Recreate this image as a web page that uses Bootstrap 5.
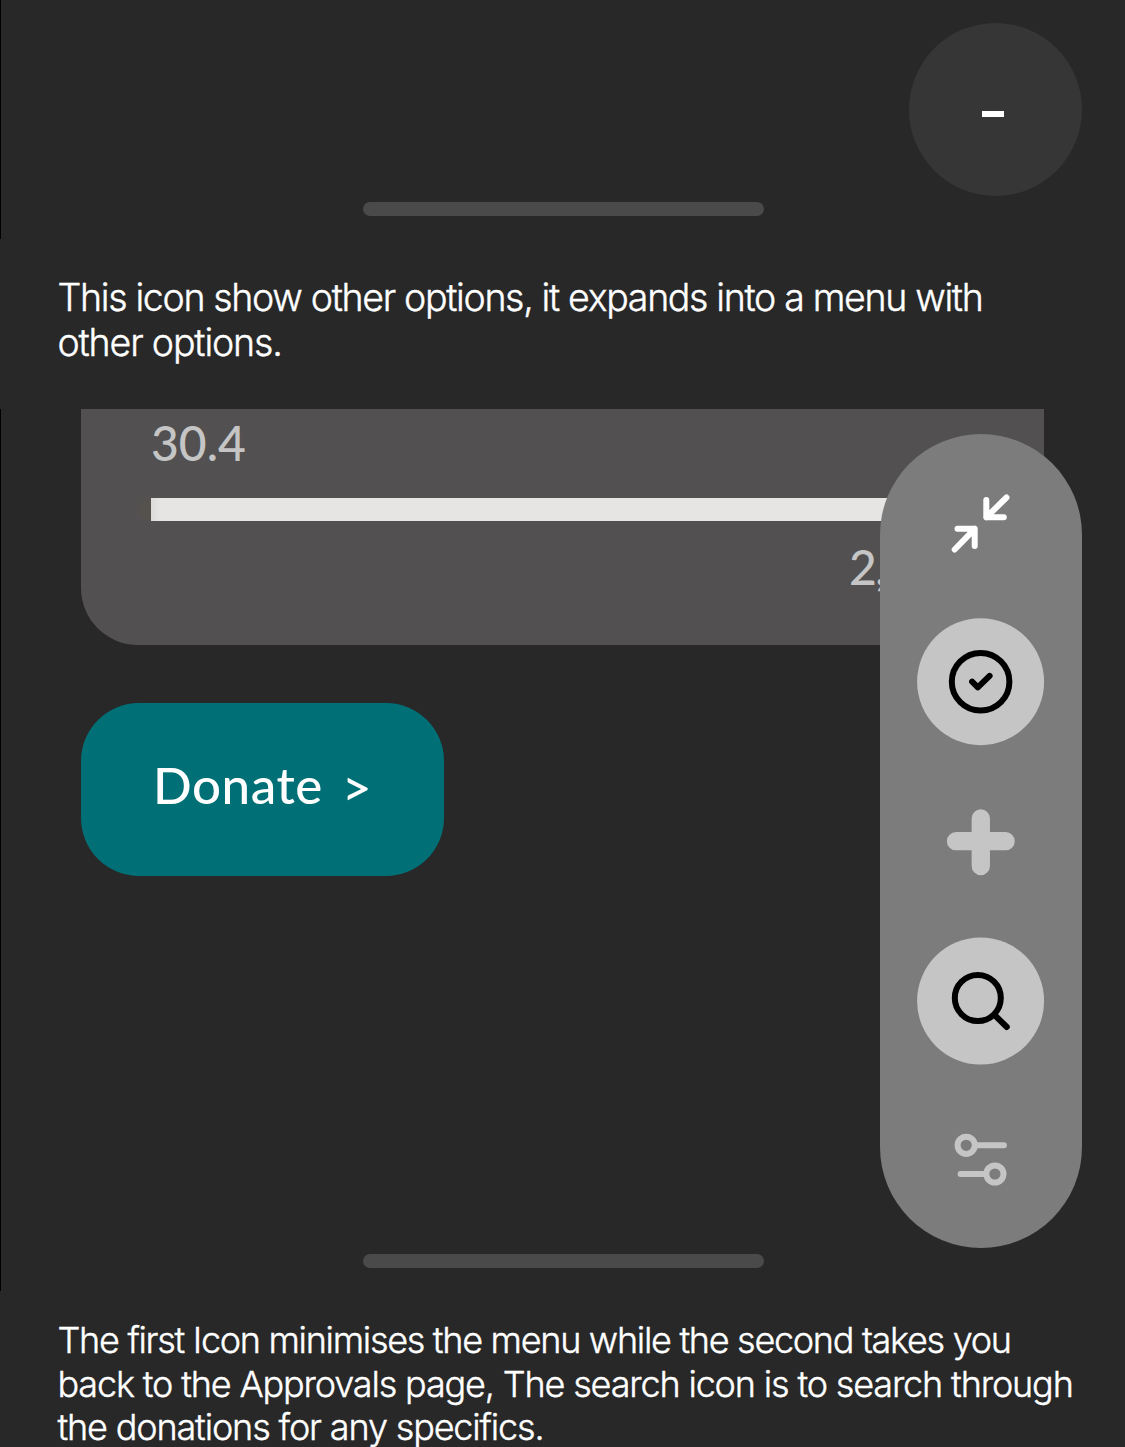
<!DOCTYPE html>
<html lang="en">
<head>
<meta charset="utf-8">
<meta name="viewport" content="width=device-width, initial-scale=1">
<title>Donation menu guide</title>
<link href="https://cdn.jsdelivr.net/npm/bootstrap@5.3.0/dist/css/bootstrap.min.css" rel="stylesheet">
<style>
body{background:#282828;color:#fff;font-family:Inter,"Liberation Sans",sans-serif;overflow:hidden}
.page{width:1125px;height:1447px}
.screen{border-left:1px solid #000}
.screen-top{height:239px;padding-top:23px}
.screen-main{height:882px}
.fab{width:173px;height:173px;background:#363636;margin-right:43.5px;padding-right:5px;padding-top:9px}
.fab-minus{width:22px;height:6px;background:#fff}
.home-bar{width:401px;height:14px;background:#4a4a4a;margin-left:361.5px}
.screen-top .home-bar{margin-top:6px}
.caption-text{padding-left:57.5px;font-weight:300;white-space:nowrap;-webkit-text-stroke:.4px #fff}
.caption-one{height:170px;padding-top:36px;font-size:37.5px;line-height:45px;letter-spacing:-1.33px}
.caption-two{height:156px;padding-top:28px;font-size:36px;line-height:43.6px;letter-spacing:-1.16px}
.l2{letter-spacing:-1.15px}
.l3{letter-spacing:-1.3px}
.stat-card{width:963px;height:236px;margin-left:80px;padding:0 70px;background:#525050;border-radius:0 0 57px 57px;color:#c5c5c5;font:500 48px/60px Lato,sans-serif}
.stat-value{padding-top:4px;height:89px}
.track{height:23px;margin-left:-12px;padding-left:12px;background:#55514c}
.track-fill{height:23px;background:linear-gradient(90deg,#dcdbda,#e6e5e3 10px)}
.stat-total{padding:16px 0 0 698px;white-space:nowrap;letter-spacing:-1.5px}
.btn.donate{--bs-btn-bg:#007076;--bs-btn-color:#fff;--bs-btn-hover-bg:#00656a;--bs-btn-hover-color:#fff;--bs-btn-border-width:0;width:363px;height:173px;margin:58px 0 0 80px;border-radius:58px;padding:0 0 10px;font:500 51px/60px Lato,sans-serif;letter-spacing:.6px}
.donate-arrow{margin-left:19px;padding-top:4px}
.screen-main .home-bar{margin-top:378px}
.tool-menu{left:879px;top:25px;width:202px;height:814px;padding-top:7.9px;background:#7c7c7c;border-radius:101px}
.tool{height:159.75px;color:#c5c5c5;padding-right:1px}
.tool svg{display:block;fill:none;stroke:currentColor;stroke-linecap:round;stroke-linejoin:round;stroke-width:6}
.tool .disc{fill:#c5c5c5;stroke:none}
.tool .plus{stroke-width:18.3px}
</style>
</head>
<body>
<main class="page d-flex flex-column">
  <section class="screen screen-top">
    <div class="fab rounded-circle ms-auto d-flex align-items-center justify-content-center"><span class="fab-minus"></span></div>
    <div class="home-bar rounded-pill"></div>
  </section>
  <p class="caption-text caption-one m-0"><span class="d-block l1">This icon show other options, it expands into a menu with</span><span class="d-block l2">other options.</span></p>
  <section class="screen screen-main position-relative">
    <div class="stat-card">
      <div class="stat-value">30.4</div>
      <div class="track rounded-pill"><div class="track-fill"></div></div>
      <div class="stat-total">2,</div>
    </div>
    <button type="button" class="btn donate d-flex align-items-center justify-content-center"><span>Donate</span><span class="donate-arrow">&gt;</span></button>
    <div class="home-bar rounded-pill"></div>
    <nav class="tool-menu position-absolute d-flex flex-column">
      <a class="tool d-flex align-items-center justify-content-center text-white"><svg width="128" height="128" viewBox="0.5 0 128 128"><path d="M90 39.5 69.8 59.3M69.8 42v17.3h17.5M38.2 91.5 58.2 70.8M41 70.8h17.2V88"/></svg></a>
      <a class="tool d-flex align-items-center justify-content-center text-black"><svg width="128" height="128" viewBox="0.4 0.3 128 128"><circle class="disc" cx="64" cy="64" r="63.5"/><circle cx="64" cy="64" r="28.8"/><path d="m55.5 64 5.7 5.7L73 58.2"/></svg></a>
      <a class="tool d-flex align-items-center justify-content-center"><svg width="128" height="128" viewBox="0.4 0 128 128"><path class="plus" d="M64.2 41.5V89M39.4 64.2H89"/></svg></a>
      <a class="tool d-flex align-items-center justify-content-center text-black"><svg width="128" height="128" viewBox="0.4 0 128 128"><circle class="disc" cx="64" cy="64" r="63.5"/><circle cx="61.2" cy="61" r="23"/><path d="m78 78 12.2 12"/></svg></a>
      <a class="tool d-flex align-items-center justify-content-center"><svg width="128" height="128" viewBox="0.4 0.3 128 128"><circle cx="49.6" cy="48.6" r="8.6"/><path d="M59 48.6h28.3M44 77.3h25.5"/><circle cx="78.3" cy="77.3" r="8.6"/></svg></a>
    </nav>
  </section>
  <p class="caption-text caption-two m-0"><span class="d-block l3">The first Icon minimises the menu while the second takes you</span><span class="d-block l4">back to the Approvals page, The search icon is to search through</span><span class="d-block l5">the donations for any specifics.</span></p>
</main>
<script src="https://cdn.jsdelivr.net/npm/bootstrap@5.3.0/dist/js/bootstrap.bundle.min.js"></script>
</body>
</html>
